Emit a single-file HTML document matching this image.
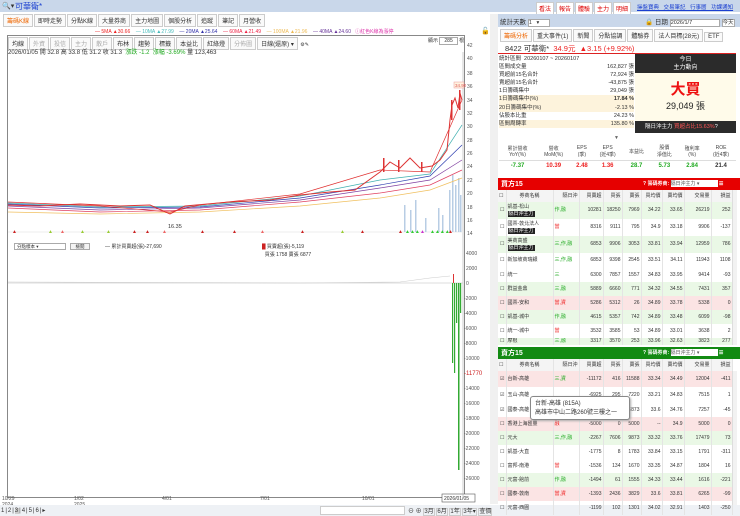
<!DOCTYPE html>
<html><head><meta charset="utf-8">
<style>
*{margin:0;padding:0;box-sizing:border-box}
body{width:740px;height:516px;overflow:hidden;background:#fff;font-family:"Liberation Sans","Noto Sans CJK TC",sans-serif;font-size:6px;color:#333;position:relative}
.a{position:absolute}
.btn{position:absolute;background:#fff;border:1px solid #ccc;color:#d00;font-size:6px;padding:1px 2px;top:2px}
.tab{display:inline-block;border:1px solid #ccc;padding:1px 3px;margin-right:1px;background:#fafafa;font-size:6px}
table{border-collapse:collapse}
.bt{table-layout:fixed}
.bt td{font-size:5px;border-right:1px solid #e4e4e4;text-align:right;padding:0 1px;white-space:nowrap;overflow:hidden;line-height:6.5px}
.bt td.l{text-align:left}
.g{color:#2a2}.r{color:#e22}
.tag{background:#222;color:#fff;padding:0 1px;display:inline-block;line-height:6.5px}
</style></head><body>
<div class="a" style="left:0;top:0;width:740px;height:12px;background:#c9d7ea"></div>
<div class="a" style="left:2px;top:2px;font-size:7px">🔍▾</div>
<div class="a" style="left:15px;top:1px;font-size:8px;color:#1a3fd0">可華衛*</div>
<div class="btn" style="left:536px">看法</div><div class="btn" style="left:556px">報告</div><div class="btn" style="left:575px">體驗</div><div class="btn" style="left:594px">主力</div><div class="btn" style="left:613px">明細</div>
<div class="a" style="left:637px;top:3px;font-size:5.5px;color:#1a3fd0;text-decoration:underline;word-spacing:3px">操盤寶典 交易筆記 行事曆 功課通知</div>
<div class="a" style="left:3px;top:14px"><span class="tab" style="color:#e60">籌碼K線</span><span class="tab">即時走勢</span><span class="tab">分點K線</span><span class="tab">大量券商</span><span class="tab">主力地圖</span><span class="tab">個股分析</span><span class="tab">追蹤</span><span class="tab">筆記</span><span class="tab">月營收</span></div>
<div class="a" style="left:95px;top:28px;font-size:5px;white-space:nowrap"><span class="r">— 5MA ▲30.66</span>&nbsp;&nbsp;&nbsp;&nbsp;<span style="color:#4bb">— 10MA ▲27.99</span>&nbsp;&nbsp;&nbsp;&nbsp;<span style="color:#33a">— 20MA ▲25.64</span>&nbsp;&nbsp;&nbsp;&nbsp;<span style="color:#e24">— 60MA ▲21.49</span>&nbsp;&nbsp;&nbsp;&nbsp;<span style="color:#eb5">— 100MA ▲21.96</span>&nbsp;&nbsp;&nbsp;&nbsp;<span style="color:#639">— 40MA ▲24.60</span>&nbsp;&nbsp;&nbsp;<span style="color:#d3a">ⓘ紅色K線為漲停</span></div>
<div class="a" style="left:481px;top:27px;font-size:7px">🔓</div>
<div class="a" style="left:7px;top:35px;width:458px;height:463px;border:1px solid #888"></div>
<div class="a" style="left:8px;top:37px;font-size:5px;white-space:nowrap"><span class="tab">均線</span><span class="tab" style="color:#aaa">外資</span><span class="tab" style="color:#aaa">投信</span><span class="tab" style="color:#aaa">主力</span><span class="tab" style="color:#aaa">散戶</span><span class="tab">布林</span><span class="tab">趨勢</span><span class="tab">標籤</span><span class="tab">本益比</span><span class="tab">紅綠燈</span><span class="tab" style="color:#aaa">分佈圖</span><span class="tab">日線(還原) ▾</span> ⚙✎</div>
<div class="a" style="left:428px;top:37px;font-size:5px">顯示 <span style="border:1px solid #aaa;padding:0 4px">285</span> 根</div>
<div class="a" style="left:8px;top:47px;font-size:6px;white-space:nowrap">2026/01/05 開 32.8 高 33.8 低 31.2 收 31.3 &nbsp;<span class="g">漲跌 -1.2 &nbsp;漲幅 -3.69%</span> 量 123,463</div>
<svg class="a" style="left:0;top:0" width="495" height="516">
<g font-size="5" fill="#555" font-family="Liberation Sans">
<text x="467" y="47">42</text><text x="467" y="60">40</text><text x="467" y="75">38</text><text x="467" y="88">36</text><text x="467" y="102">34</text><text x="467" y="115">32</text><text x="467" y="128">30</text><text x="467" y="142">28</text><text x="467" y="155">26</text><text x="467" y="168">24</text><text x="467" y="182">22</text><text x="467" y="195">20</text><text x="467" y="209">18</text><text x="467" y="222">16</text><text x="467" y="235">14</text>
<text x="466" y="255">4000</text><text x="466" y="270">2000</text><text x="466" y="285">0</text><text x="464" y="300">-2000</text><text x="464" y="315">-4000</text><text x="464" y="330">-6000</text><text x="464" y="345">-8000</text><text x="464" y="360">-10000</text><text x="464" y="375" fill="#c22" font-size="6">-11770</text><text x="464" y="390">-14000</text><text x="464" y="405">-16000</text><text x="464" y="420">-18000</text><text x="464" y="435">-20000</text><text x="464" y="450">-22000</text><text x="464" y="465">-24000</text><text x="464" y="480">-26000</text>
<text x="2" y="500">10/29</text><text x="2" y="506">2024</text><text x="74" y="500">1/02</text><text x="74" y="506">2025</text><text x="162" y="500">4/01</text><text x="260" y="500">7/01</text><text x="362" y="500">10/01</text>
</g>
<rect x="442" y="494" width="33" height="8" fill="#fff" stroke="#555" stroke-width=".6"/><text x="444" y="500" font-size="5" fill="#333">2026/01/05</text>
<line x1="463" y1="52" x2="463" y2="497" stroke="#aaa" stroke-width=".6"/>
<line x1="8" y1="232" x2="463" y2="232" stroke="#eee"/>
<line x1="8" y1="283" x2="463" y2="283" stroke="#bbb" stroke-width=".5"/>
<g fill="#b8cde4">
<rect x="404" y="205" width="1.5" height="27"/><rect x="410" y="210" width="1.5" height="22"/><rect x="415" y="200" width="1.5" height="32"/><rect x="425" y="218" width="1.5" height="14"/><rect x="438" y="208" width="1.5" height="24"/><rect x="442" y="215" width="1.5" height="17"/><rect x="449" y="190" width="1.5" height="42"/><rect x="452" y="175" width="1.5" height="57"/><rect x="455" y="185" width="1.5" height="47"/><rect x="458" y="178" width="1.5" height="54"/><rect x="460" y="195" width="1.5" height="37"/>
</g>
<polyline fill="none" stroke="#f0c060" stroke-width=".7" points="8,212 100,214 200,212 300,206 380,198 430,190 462,178"/>
<polyline fill="none" stroke="#e04060" stroke-width=".7" points="8,208 100,212 200,210 300,202 380,193 430,185 462,170"/>
<polyline fill="none" stroke="#8040a0" stroke-width=".7" points="8,206 100,210 200,208 300,200 380,188 430,180 462,160"/>
<polyline fill="none" stroke="#3040b0" stroke-width=".7" points="8,204 100,208 200,207 300,198 380,185 430,176 462,145"/>
<polyline fill="none" stroke="#40b0b0" stroke-width=".7" points="8,203 100,207 200,206 300,196 380,180 430,174 462,125"/>
<polyline fill="none" stroke="#e03030" stroke-width=".7" points="8,202 100,206 170,212 200,205 300,194 380,170 430,172 462,100"/>
<polyline fill="none" stroke="#d33" stroke-width="1" points="8,205 40,206 80,204 120,206 150,205 170,214 185,206 230,202 270,200 300,195 330,192 355,190 380,172 390,162 400,168 410,158 420,168 432,166 440,160 447,150 450,120 452,105 455,98 458,108 460,93 462,100"/>
<g fill="#d33"><rect x="383" y="158" width="1.5" height="14"/><rect x="398" y="160" width="1.5" height="12"/><rect x="421" y="162" width="1.5" height="10"/><rect x="451" y="100" width="1.5" height="20"/><rect x="459" y="90" width="1.5" height="20"/></g>
<text x="168" y="228" font-size="5.5" fill="#333">16.35</text>
<rect x="454" y="82" width="10" height="6" fill="#fff3e0" stroke="#e99" stroke-width=".5"/><text x="455" y="87" font-size="4.5" fill="#d55">34.90</text>
<g font-size="5"><text x="12" y="233" fill="#c22">▲</text><text x="48" y="233" fill="#9c3">▲</text><text x="60" y="233" fill="#e66">▲</text><text x="80" y="233" fill="#9c3">▲</text><text x="106" y="233" fill="#9c3">▲</text><text x="132" y="233" fill="#c22">▲</text><text x="145" y="233" fill="#c22">▲</text><text x="162" y="233" fill="#e66">▲</text><text x="200" y="233" fill="#c22">▲</text><text x="232" y="233" fill="#c22">▲</text><text x="260" y="233" fill="#e66">▲</text><text x="300" y="233" fill="#c22">▲</text><text x="340" y="233" fill="#9c3">▲</text><text x="360" y="233" fill="#c22">▲</text><text x="398" y="233" fill="#c22">▲</text><text x="405" y="233" fill="#3c3">▲▲▲</text><text x="420" y="233" fill="#c3c">▲</text><text x="430" y="233" fill="#3c3">▲▲▲▲</text><text x="448" y="233" fill="#c22">▲</text></g>
<polyline fill="none" stroke="#ccc" stroke-width=".6" points="8,282 300,283 400,282 430,278 450,276"/>
<g fill="#3a3"><rect x="452" y="283" width="1.2" height="80"/><rect x="454" y="283" width="1.2" height="90"/><rect x="456" y="283" width="1.2" height="40"/><rect x="458" y="283" width="1.5" height="187"/><rect x="460" y="283" width="1.2" height="30"/></g>
<rect x="453" y="274" width="1" height="9" fill="#d33"/>
</svg>
<div class="a" style="left:14px;top:243px;width:52px;height:7px;border:1px solid #aaa;font-size:4.5px;padding-left:2px">分點樣本 ▾</div>
<div class="a" style="left:70px;top:243px;width:20px;height:7px;border:1px solid #aaa;font-size:4.5px;text-align:center;background:#f3f3f3">檢閱</div>
<div class="a" style="left:105px;top:243px;font-size:5px">— 累計買賣超(張)-27,690</div>
<div class="a" style="left:262px;top:243px;font-size:5px;line-height:8px"><span style="color:#c22">█</span> 買賣超(張)-5,119<br>&nbsp;&nbsp;買張 1758 賣張 6877</div>
<div class="a" style="left:0;top:505px;width:740px;height:11px;background:#eef1f5"></div>
<div class="a" style="left:1px;top:507px;font-size:6px;letter-spacing:1px">1|2|<span style="background:#ccc">3</span>|4|5|6|▸</div>
<div class="a" style="left:320px;top:506px;width:85px;height:9px;border:1px solid #ccc;background:#fff"></div>
<div class="a" style="left:408px;top:506px;font-size:6px;white-space:nowrap">⊖ ⊕ <span style="border:1px solid #ccc">3月</span> <span style="border:1px solid #ccc">6月</span> <span style="border:1px solid #ccc">1年</span> <span style="border:1px solid #ccc">3年▾</span> <span style="border:1px solid #ccc">查價</span></div>
<div class="a" style="left:490px;top:14px;width:8px;height:490px;background:#f0f0f0"></div>
<div class="a" style="left:498px;top:14px;width:242px;height:13px;background:#c9d7ea"></div>
<div class="a" style="left:500px;top:16px;font-size:6.5px">統計天數 <span style="display:inline-block;background:#fff;border:1px solid #aaa;width:22px;font-size:5.5px">1 &nbsp;&nbsp;▾</span></div>
<div class="a" style="left:645px;top:16px;font-size:6.5px">🔒 日期 <span style="display:inline-block;background:#fff;border:1px solid #aaa;width:50px;font-size:5.5px">2026/1/7</span> <span style="background:#fff;border:1px solid #aaa;font-size:5.5px">今天</span></div>
<div class="a" style="left:500px;top:29px;font-size:5.5px;white-space:nowrap"><span class="tab" style="color:#e60">籌碼分析</span><span class="tab">重大事件(1)</span><span class="tab">新聞</span><span class="tab">分點協調</span><span class="tab">體驗券</span><span class="tab">法人目標(28元)</span><span class="tab">ETF</span></div>
<div class="a" style="left:498px;top:40px;width:238px;height:14px;border-bottom:1.5px solid #d22;font-size:7.5px;padding:3px 0 0 7px;white-space:nowrap">8422 可華衛* &nbsp;<span class="r">34.9元 &nbsp;▲3.15 (+9.92%)</span></div>
<div class="a" style="left:499px;top:55px;width:135px;font-size:5.5px;line-height:8.1px">
<div style="display:flex;justify-content:space-between"><span>統計區間 &nbsp;20260107 ~ 20260107</span></div>
<div style="display:flex;justify-content:space-between"><span>區間成交量</span><span>162,827 張</span></div>
<div style="display:flex;justify-content:space-between"><span>買超前15名合計</span><span>72,924 張</span></div>
<div style="display:flex;justify-content:space-between"><span>賣超前15名合計</span><span>-43,875 張</span></div>
<div style="display:flex;justify-content:space-between"><span>1日籌碼集中</span><span>29,049 張</span></div>
<div style="display:flex;justify-content:space-between;background:#fdf3dc"><span>1日籌碼集中(%)</span><b>17.84 %</b></div>
<div style="display:flex;justify-content:space-between;background:#fdf3dc"><span>20日籌碼集中(%)</span><span>-2.13 %</span></div>
<div style="display:flex;justify-content:space-between"><span>佔股本比重</span><span>24.23 %</span></div>
<div style="display:flex;justify-content:space-between;background:#fdf3dc"><span>區間周轉率</span><span>135.80 %</span></div>
</div>
<div class="a" style="left:635px;top:54px;width:101px;height:19px;background:#2b2b2b;color:#fff;font-size:6px;text-align:center;line-height:8px;padding-top:2px">今日<br>主力動向</div>
<div class="a" style="left:635px;top:73px;width:101px;height:48px;background:#fffbea;text-align:center"><div style="color:#e11;font-size:15px;font-weight:bold;margin-top:5px">大買</div><div style="font-size:9px;color:#222">29,049 張</div></div>
<div class="a" style="left:635px;top:121px;width:101px;height:12px;background:#2b2b2b;color:#fff;font-size:5.5px;line-height:12px;padding-left:10px;white-space:nowrap">隔日沖主力 <span style="color:#f55">買超占比15.63%</span>?</div>
<div class="a" style="left:614px;top:135px;font-size:5px;color:#666">▼</div>
<table class="a" style="left:499px;top:143px;width:237px;font-size:5px;text-align:center">
<tr style="height:17px;color:#444"><td>累計營收<br>YoY(%)</td><td>營收<br>MoM(%)</td><td>EPS<br>(季)</td><td>EPS<br>(近4季)</td><td>本益比</td><td>股價<br>淨值比</td><td>殖利率<br>(%)</td><td>ROE<br>(近4季)</td></tr>
<tr style="height:11px;font-size:6px;font-weight:bold;border-top:1px solid #ddd"><td class="g">-7.37</td><td class="r">10.39</td><td class="r">2.48</td><td class="r">1.36</td><td class="g">28.7</td><td class="g">5.73</td><td class="g">2.84</td><td>21.4</td></tr>
</table>
<div class="a" style="left:498px;top:178px;width:242px;height:12px;background:#e60000;color:#fff;font-size:7px;font-weight:bold;padding:1px 3px">買方15<span style="position:absolute;left:145px;top:2px;font-size:5px">? 籌碼券商: <span style="background:#fff;color:#555;display:inline-block;width:47px;font-weight:normal">隔日沖主力 ▾</span> ☰</span></div>
<table class="a bt" style="left:498px;top:190px;width:234px">
<colgroup><col style="width:8px"><col style="width:47px"><col style="width:26px"><col style="width:24px"><col style="width:19px"><col style="width:19px"><col style="width:21px"><col style="width:22px"><col style="width:27px"><col style="width:21px"></colgroup>
<tr style="height:12px;background:#f4f4f4"><td class="l">☐</td><td class="l" style="text-align:center">券商名稱</td><td>隔日沖</td><td>買賣超</td><td>買張</td><td>賣張</td><td>買均價</td><td>賣均價</td><td>交易量</td><td>損益</td></tr>
<tr style="height:17px;background:#eaf8e6"><td>☐</td><td class="l">凱基-松山<br><span class="tag">隔日沖主力</span></td><td class="l g">作,融</td><td>10281</td><td>18250</td><td>7969</td><td>34.22</td><td>33.65</td><td>26219</td><td>252</td></tr>
<tr style="height:17px"><td>☐</td><td class="l">國票-敦北法人<br><span class="tag">隔日沖主力</span></td><td class="l r">當</td><td>8316</td><td>9111</td><td>795</td><td>34.9</td><td>33.18</td><td>9906</td><td>-137</td></tr>
<tr style="height:17px;background:#eaf8e6"><td>☐</td><td class="l">美商高盛<br><span class="tag">隔日沖主力</span></td><td class="l g">三,作,融</td><td>6853</td><td>9906</td><td>3053</td><td>33.81</td><td>33.94</td><td>12959</td><td>786</td></tr>
<tr style="height:15px"><td>☐</td><td class="l">新加坡商瑞銀</td><td class="l g">三,作,融</td><td>6853</td><td>9398</td><td>2545</td><td>33.51</td><td>34.11</td><td>11943</td><td>1108</td></tr>
<tr style="height:14px"><td>☐</td><td class="l">統一</td><td class="l g">三</td><td>6300</td><td>7857</td><td>1557</td><td>34.83</td><td>33.95</td><td>9414</td><td>-93</td></tr>
<tr style="height:14px;background:#eaf8e6"><td>☐</td><td class="l">群益金鼎</td><td class="l g">三,融</td><td>5889</td><td>6660</td><td>771</td><td>34.32</td><td>34.55</td><td>7431</td><td>357</td></tr>
<tr style="height:14px;background:#fbe4e4"><td>☐</td><td class="l">國票-安和</td><td class="l r">當,資</td><td>5286</td><td>5312</td><td>26</td><td>34.89</td><td>33.78</td><td>5338</td><td>0</td></tr>
<tr style="height:14px;background:#eaf8e6"><td>☐</td><td class="l">凱基-城中</td><td class="l g">作,融</td><td>4615</td><td>5357</td><td>742</td><td>34.89</td><td>33.48</td><td>6099</td><td>-98</td></tr>
<tr style="height:14px"><td>☐</td><td class="l">統一-城中</td><td class="l r">當</td><td>3532</td><td>3585</td><td>53</td><td>34.89</td><td>33.01</td><td>3638</td><td>2</td></tr>
<tr style="height:6px;background:#eaf8e6"><td>☐</td><td class="l">摩根</td><td class="l g">三,融</td><td>3317</td><td>3570</td><td>253</td><td>33.96</td><td>32.63</td><td>3823</td><td>277</td></tr>
</table>
<div class="a" style="left:498px;top:347px;width:242px;height:12px;background:#128a12;color:#fff;font-size:7px;font-weight:bold;padding:1px 3px">賣方15<span style="position:absolute;left:145px;top:2px;font-size:5px">? 籌碼券商: <span style="background:#fff;color:#555;display:inline-block;width:47px;font-weight:normal">隔日沖主力 ▾</span> ☰</span></div>
<table class="a bt" style="left:498px;top:359px;width:234px">
<colgroup><col style="width:8px"><col style="width:47px"><col style="width:26px"><col style="width:24px"><col style="width:19px"><col style="width:19px"><col style="width:21px"><col style="width:22px"><col style="width:27px"><col style="width:21px"></colgroup>
<tr style="height:12px;background:#f4f4f4"><td class="l">☐</td><td class="l" style="text-align:center">券商名稱</td><td>隔日沖</td><td>買賣超</td><td>買張</td><td>賣張</td><td>買均價</td><td>賣均價</td><td>交易量</td><td>損益</td></tr>
<tr style="height:16px;background:#fbe4e4"><td>☑</td><td class="l">台新-高雄</td><td class="l g">三,資</td><td>-11172</td><td>416</td><td>11588</td><td>33.34</td><td>34.49</td><td>12004</td><td>-411</td></tr>
<tr style="height:16px"><td>☑</td><td class="l">玉山-高雄</td><td class="l"></td><td>-6925</td><td>295</td><td>7220</td><td>33.21</td><td>34.83</td><td>7515</td><td>1</td></tr>
<tr style="height:14px"><td>☑</td><td class="l">國泰-高雄</td><td class="l"></td><td>-6489</td><td>384</td><td>6873</td><td>33.6</td><td>34.76</td><td>7257</td><td>-45</td></tr>
<tr style="height:14px;background:#fbe4e4"><td>☐</td><td class="l">香港上海匯豐</td><td class="l r">融</td><td>-5000</td><td>0</td><td>5000</td><td>--</td><td>34.9</td><td>5000</td><td>0</td></tr>
<tr style="height:14px;background:#eaf8e6"><td>☐</td><td class="l">元大</td><td class="l g">三,作,融</td><td>-2267</td><td>7606</td><td>9873</td><td>33.32</td><td>33.76</td><td>17479</td><td>73</td></tr>
<tr style="height:14px"><td>☐</td><td class="l">凱基-大直</td><td class="l"></td><td>-1775</td><td>8</td><td>1783</td><td>33.84</td><td>33.15</td><td>1791</td><td>-311</td></tr>
<tr style="height:14px"><td>☐</td><td class="l">富邦-南港</td><td class="l r">當</td><td>-1536</td><td>134</td><td>1670</td><td>33.35</td><td>34.87</td><td>1804</td><td>16</td></tr>
<tr style="height:14px;background:#eaf8e6"><td>☐</td><td class="l">元富-館前</td><td class="l g">作,融</td><td>-1494</td><td>61</td><td>1555</td><td>34.33</td><td>33.44</td><td>1616</td><td>-221</td></tr>
<tr style="height:14px;background:#fbe4e4"><td>☐</td><td class="l">國泰-敦南</td><td class="l r">當,資</td><td>-1393</td><td>2436</td><td>3829</td><td>33.6</td><td>33.81</td><td>6265</td><td>-99</td></tr>
<tr style="height:14px"><td>☐</td><td class="l">元富-西園</td><td class="l"></td><td>-1199</td><td>102</td><td>1301</td><td>34.02</td><td>32.91</td><td>1403</td><td>-250</td></tr>
</table>
<div class="a" style="left:530px;top:396px;width:100px;height:24px;background:#fff;border:1px solid #888;border-radius:3px;font-size:6px;padding:3px 4px;line-height:9px;box-shadow:1px 1px 2px #aaa">台新-高雄 (815A)<br>高雄市中山二路260號三樓之一</div>
<div class="a" style="left:732px;top:190px;width:5px;height:155px;background:#f2f2f2;border-left:1px solid #ddd"></div>
<div class="a" style="left:732px;top:371px;width:5px;height:134px;background:#f2f2f2;border-left:1px solid #ddd"></div>
</body></html>
